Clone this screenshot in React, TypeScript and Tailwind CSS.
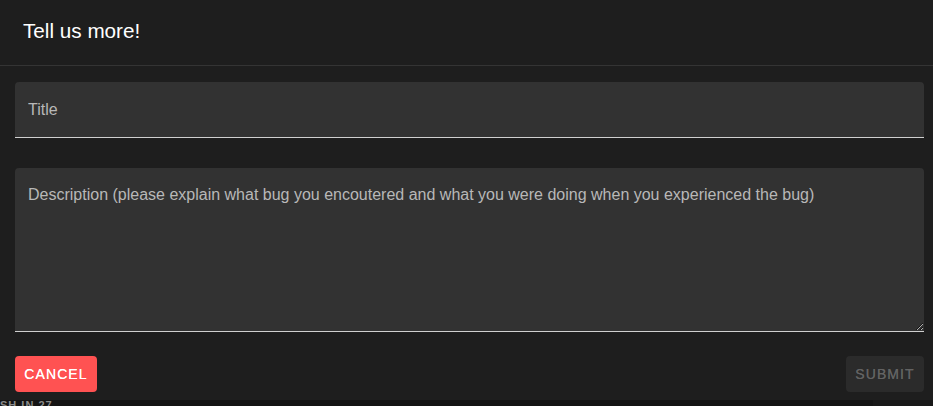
import React from 'react';

const App: React.FC = () => {
  return (
    <div className="h-[406px] w-[933px] overflow-hidden bg-[#121212] font-['Liberation_Sans',Arial,sans-serif]">
      <div className="flex h-[400px] flex-col bg-[#1e1e1e]">
        <header className="flex h-[66px] shrink-0 items-center border-b border-[#343434] px-[23px] pb-[3px]">
          <h2 className="text-[20.7px] font-normal text-white">Tell us more!</h2>
        </header>
        <div className="flex flex-col pl-[15px] pr-[9px] pt-[16px]">
          <input
            className="h-[56px] w-full rounded-t-[4px] border-b border-[#d0d0d0] bg-[#323232] px-[13px] text-[16px] text-white outline-none placeholder:text-[#b8b8b8]"
            placeholder="Title"
          />
          <textarea
            className="mt-[30px] h-[164px] w-full rounded-t-[4px] border-b border-[#d0d0d0] bg-[#323232] px-[13px] pt-[15px] text-[16px] leading-[24px] text-white outline-none placeholder:text-[#b8b8b8]"
            placeholder="Description (please explain what bug you encoutered and what you were doing when you experienced the bug)"
          />
          <div className="mt-[24px] flex items-center justify-between">
            <button className="h-[36px] w-[82px] rounded-[4px] bg-[#ff5252] text-center text-[14px] font-normal tracking-[1.1px] text-white [text-shadow:0_0_0.5px_#fff]">
              CANCEL
            </button>
            <button className="h-[36px] w-[78px] rounded-[4px] bg-[#2b2b2b] text-center text-[14px] font-normal tracking-[1.1px] text-[#636363] [text-shadow:0_0_0.5px_#636363]">
              SUBMIT
            </button>
          </div>
        </div>
      </div>
      <div className="flex h-[6px] overflow-hidden">
        <div className="w-[873px] bg-[#141414]">
          <span className="-mt-[1px] block text-[11px] font-bold leading-[13px] tracking-[1px] text-[#8a8a8a]">
            SH IN 27
          </span>
        </div>
        <div className="flex-1 bg-[#181818]" />
      </div>
    </div>
  );
};

export default App;
